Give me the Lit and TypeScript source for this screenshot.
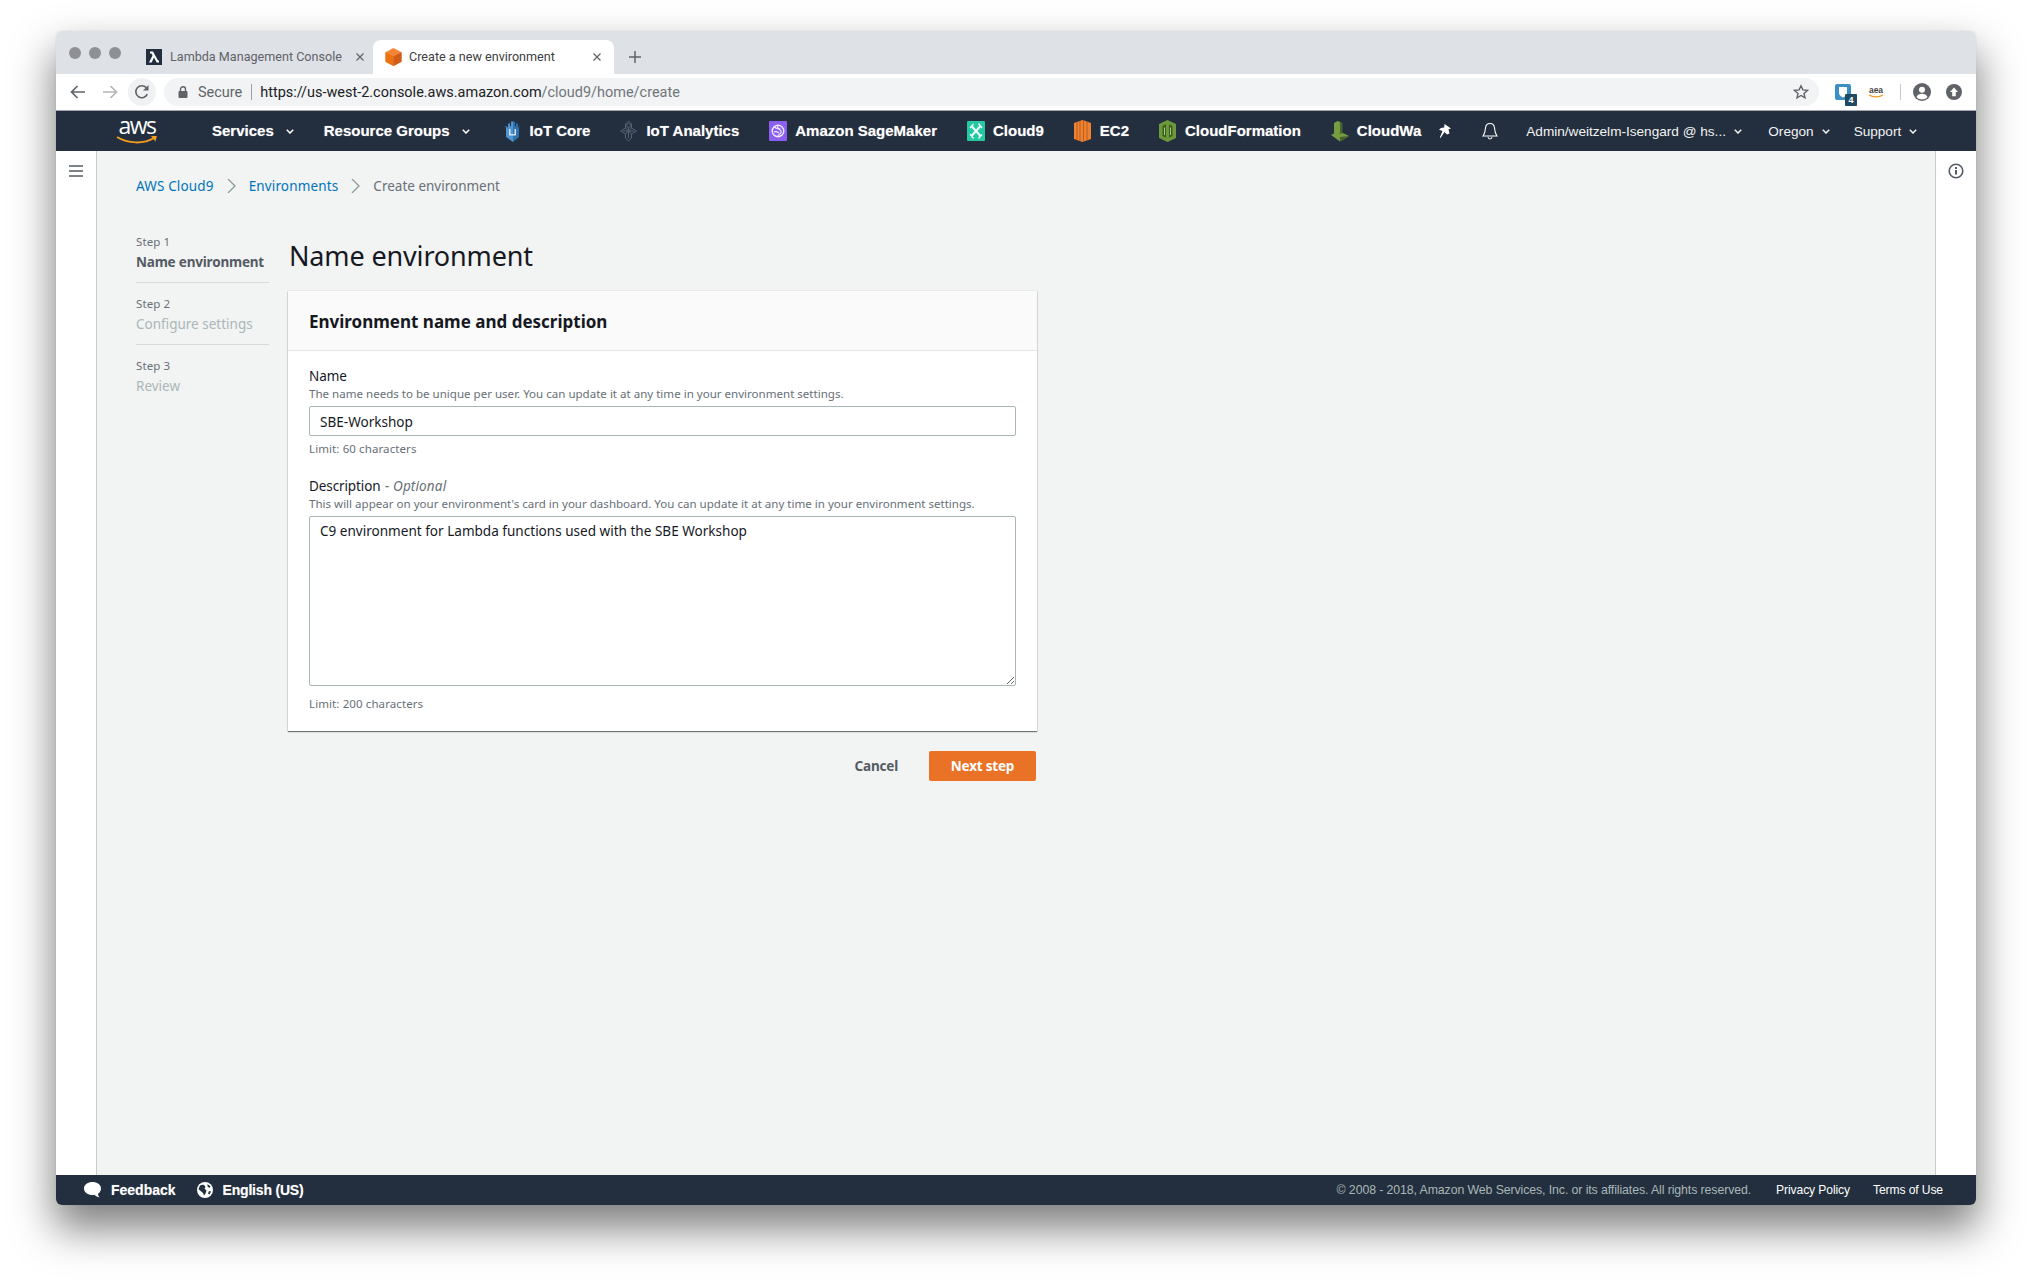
import { LitElement, html, css, svg } from "lit";
import { customElement } from "lit/decorators.js";

const caret = html`<svg class="caret" width="8" height="5" viewBox="0 0 8 5"><path d="M.8.8L4 4l3.200-3.200" fill="none" stroke="currentColor" stroke-width="1.500"/></svg>`;

const icons: Record<string, unknown> = {
  iot: svg`<path d="M0 7l2-1v11l7 5v-20l-1-1-1 1v4l-1 .5V3L4 4v3.500L2 6.500z" fill="#5294cf"/><path d="M17 7l-2-1v11l-6 5V2l1-1 1 1v4l1 .5V3l2 1v3.500l2-1z" fill="#2d72ad"/><path d="M5 9h1.500v5H5zM10.500 9H12v5h-1.500zM5 14h7v1.500H5z" fill="#cfe3f5"/>`,
  analytics: svg`<g fill="none" stroke="#566270" stroke-width="1"><path d="M8.500 1l3 3v4l5 3-5 3v4l-3 3-3-3v-4l-5-3 5-3V4z"/><circle cx="8.500" cy="5.500" r="2"/><path d="M8.500 7.500V18M3 11h11M5.500 8l3 3 3-3M5.500 14l3-3 3 3"/></g>`,
  sage: svg`<rect x="0" y="1" width="18" height="20" rx="1" fill="#8c5ff0"/><circle cx="9" cy="11" r="5.800" fill="none" stroke="#efe8ff" stroke-width="1.400"/><path d="M5.500 7c2 2 5 1 6.500 4s-3 3-3 5M5 12c2-1 3.500 0 5 1M9 5.500c-1 2 0 3.500 2.500 3.500" fill="none" stroke="#efe8ff" stroke-width="1.100"/>`,
  cloud9: svg`<rect x="0" y="1" width="18" height="20" rx="1" fill="#27c7a3"/><path d="M4.500 6l9 10M13.500 6l-9 10" stroke="#e9fff9" stroke-width="2"/><path d="M3 8l3.500-4M11.500 18.500L15 14.500M11.500 3.500L15 8M3 14l3.500 4.500" stroke="#e9fff9" stroke-width="1.300"/>`,
  ec2: svg`<path d="M8.500 0L17 3v16l-8.500 3L0 19V3z" fill="#f0812f"/><path d="M3 2v18M6 1v20M9.500 .5v21M13 1.500v19" stroke="#a65520" stroke-width=".8"/>`,
  cf: svg`<path d="M8.500 0l8.500 4v14l-8.500 4L0 18V4z" fill="#6a9a3a"/><path d="M3.500 6l3.500-1.800v13.600L3.500 16zM13.500 6L10 4.200v13.600l3.500-1.800z" fill="#3e5e20"/><path d="M5 7.500h1v7.500H5zM11 7.500h1v7.500h-1z" fill="#a9c77a"/>`,
  cw: svg`<path d="M3 13V3l3.500-2 3 1v11z" fill="#759c3e"/><path d="M9.500 2l2 1v10l-2 1z" fill="#4b612c"/><path d="M0 15l5.500-3 3.500 1.500 3-.5 6 3-9 5.500z" fill="#759c3e"/><path d="M9 17l9-1-9 5.500z" fill="#4b612c"/>`,
};

const navIcon = (k: string) => html`<svg class="nicon" width="18" height="22" viewBox="0 0 18 22">${icons[k]}</svg>`;

const shortcuts: [string, string][] = [
  ["iot", "IoT Core"],
  ["analytics", "IoT Analytics"],
  ["sage", "Amazon SageMaker"],
  ["cloud9", "Cloud9"],
  ["ec2", "EC2"],
  ["cf", "CloudFormation"],
  ["cw", "CloudWa"],
];

@customElement("app-root")
export class AppRoot extends LitElement {
  static styles = css`
    :host { display: block; height: 1285px; padding: 31px 56px 0; box-sizing: border-box; background: #fff; overflow: hidden; font-family: "Roboto", "Liberation Sans", sans-serif; }
    .window { width: 1920px; height: 1174px; display: flex; flex-direction: column; border-radius: 6px; overflow: hidden; }
    .frame { width: 1920px; height: 1174px; border-radius: 6px; box-shadow: 0 22px 42px 2px rgba(0,0,0,.5), 0 0 1px rgba(0,0,0,.25); }

    .tabs { height: 43px; flex: none; background: #dee1e6; display: flex; align-items: flex-end; }
    .lights { display: flex; gap: 8px; padding: 0 0 15px 13px; width: 90px; box-sizing: border-box; flex: none; align-self: flex-end; }
    .lights i { width: 12px; height: 12px; border-radius: 50%; background: #8e9095; display: block; }
    .tab { display: flex; align-items: center; height: 34px; padding-bottom: 1px; font-size: 12.600px; color: #5f6368; box-sizing: border-box; flex: none; }
    .tab1 { width: 227px; }
    .tab1 .fav { margin-right: 8px; }
    .tab1 .x { margin-left: 13px; }
    .tab2 { width: 241px; background: #fff; border-radius: 8px 8px 0 0; padding-left: 12px; color: #3c4043; }
    .tab2 .fav { margin-right: 7px; }
    .tab2 .x { margin-left: auto; margin-right: 12px; }
    .x { flex: none; }
    .plus { margin: 0 0 11px 15px; flex: none; }

    .bar { height: 36px; flex: none; background: #fff; border-bottom: 1px solid #a4a6a9; display: flex; align-items: center; box-sizing: content-box; }
    .tool { width: 32px; display: flex; justify-content: center; flex: none; }
    .reload { width: 28px; height: 28px; border-radius: 50%; background: #f0f1f2; display: flex; align-items: center; justify-content: center; flex: none; margin: 0 8px 0 0; }
    .navbtns { display: flex; padding-left: 6px; flex: none; }
    .reload-wrap { padding-left: 2px; flex: none; }
    .omni { flex: none; width: 1655px; height: 28px; border-radius: 14px; background: #f1f3f4; display: flex; align-items: center; padding: 0 10px 0 14px; box-sizing: border-box; font-size: 14.460px; color: #5f6368; }
    .omni .sec { margin-left: 10px; }
    .omni .sep { width: 1px; height: 16px; background: #9aa0a6; margin: 0 8px 0 9px; }
    .omni .url { color: #202124; }
    .omni .url span { color: #70757a; }
    .omni .star { margin-left: auto; }
    .ext { flex: none; display: flex; align-items: center; height: 36px; padding-left: 16px; }
    .bw { width: 16px; height: 16px; position: relative; display: block; }
    .badge { position: absolute; left: 10px; top: 10px; width: 12px; height: 12px; background: #1f4a63; color: #fff; font: bold 9px/12px "Liberation Sans", sans-serif; text-align: center; border-radius: 1px; }
    .aea { margin-left: 17px; width: 16px; display: block; }
    .xsep { width: 1px; height: 16px; background: #c6c8cb; margin: 0 12px 0 16px; }
    .prof { display: block; }
    .up { display: block; margin-left: 15px; }

    .nav { height: 40px; flex: none; background: #232f3e; display: flex; align-items: center; color: #fff; font-family: "Liberation Sans", sans-serif; }
    .logo { margin: -2px 0 0 60px; flex: none; width: 42px; display: flex; flex-direction: column; align-items: center; }
    .logo span { font: 400 23px/18px "Open Sans", sans-serif; letter-spacing: -1.500px; color: #fff; display: block; }
    .logo svg { display: block; margin-top: 2px; }
    .svc { display: flex; align-items: center; gap: 30px; margin-left: 54px; flex: none; }
    .nitem { display: flex; align-items: center; font-weight: 700; font-size: 15px; line-height: 20px; text-shadow: 0 0 1px rgba(255,255,255,.5); white-space: nowrap; }
    .nitem .nicon { margin-right: 8px; flex: none; }
    .nitem .caret { margin-left: 12px; }
    .nitem.rg { margin-right: 4px; }
    .pin { margin-left: 17px; flex: none; }
    .bell { margin-left: 29px; flex: none; }
    .acct { display: flex; align-items: center; font-size: 13.600px; margin-left: 27px; color: #f2f3f3; flex: none; }
    .acct span { white-space: nowrap; }
    .acct .caret { margin: 0 0 0 8px; flex: none; }
    .acct .a { width: 218px; display: flex; align-items: center; }
    .acct .b { margin-left: 24px; display: flex; align-items: center; }
    .acct .c { margin-left: 24px; display: flex; align-items: center; }

    .main { flex: 1; display: flex; background: #f2f3f3; min-height: 0; font-family: "Noto Sans", sans-serif; }
    .rail { width: 40px; flex: none; background: #fff; border-right: 1px solid #c8cccc; display: flex; justify-content: center; padding-top: 14px; box-sizing: content-box; }
    .rail.right { border-right: 0; border-left: 1px solid #c8cccc; padding-top: 12px; }
    .burger { display: block; margin-left: -1px; }
    .info { display: block; }
    .center { flex: 1; padding: 17px 0 0 39px; min-width: 0; }

    .crumbs { display: flex; align-items: center; font-size: 13.500px; line-height: 36px; height: 36px; color: #687078; }
    .crumbs a { color: #0073bb; letter-spacing: .15px; }
    .crumbs svg { margin: 0 13px; display: block; }
    .wizard { display: flex; margin-top: 28px; }
    .steps { width: 133px; flex: none; margin-right: 19px; }
    .step { padding-bottom: 10px; border-bottom: 1px solid #d5dbdb; margin-bottom: 11px; }
    .step:last-child { border-bottom: 0; }
    .step .n { font-size: 11.500px; line-height: 20px; color: #687078; letter-spacing: .1px; }
    .step .t { font-size: 13.500px; line-height: 20px; color: #aab7b8; white-space: nowrap; }
    .step.on .t { color: #545b64; font-weight: 700; letter-spacing: -.2px; }
    .form { width: 749px; flex: none; margin-top: 2px; }
    h1 { margin: 0 0 0 1px; font-size: 27px; line-height: 44px; font-weight: 400; color: #16191f; letter-spacing: -.15px; }
    .card { margin-top: 13px; background: #fff; box-shadow: 0 1px 1px rgba(0,0,0,.5), 0 0 1px rgba(0,0,0,.25); }
    .card header { height: 58px; padding: 1px 0 0 21px; background: #fafafa; border-bottom: 1px solid #e5e8e8; display: flex; align-items: center; font-size: 17px; font-weight: 700; color: #16191f; box-sizing: content-box; }
    .fields { padding: 15px 21px 19px; }
    .lbl { font-size: 13.500px; line-height: 20px; color: #16191f; letter-spacing: -.1px; }
    .lbl em { color: #687078; letter-spacing: .15px; margin-left: 1px; }
    .hint { font-size: 11.560px; line-height: 16px; color: #687078; }
    .box { display: block; width: 100%; box-sizing: border-box; border: 1px solid #aab7b8; border-radius: 2px; background: #fff; margin-top: 4px; padding: 0 10px; font: inherit; font-size: 13.560px; color: #16191f; outline: none; }
    input.box { height: 30px; padding-top: 1px; }
    textarea.box { height: 170px; padding-top: 4px; line-height: 20px; resize: vertical; }
    .limit { font-size: 11.500px; line-height: 16px; color: #687078; margin-top: 5px; letter-spacing: .1px; }
    .g2 { margin-top: 19px; }
    .g2 .box + .limit { margin-top: 10px; }
    .actions { display: flex; justify-content: flex-end; align-items: center; margin: 20px 1px 0 0; letter-spacing: -.2px; }
    .cancel { font-size: 13.500px; font-weight: 700; color: #545b64; margin-right: 31px; }
    .next { width: 107px; height: 30px; background: #ea7226; color: #fff; border-radius: 2px; display: flex; align-items: center; justify-content: center; font-size: 13.500px; font-weight: 700; }

    .foot { height: 30px; flex: none; background: #232f3e; display: flex; align-items: center; color: #fff; font-family: "Liberation Sans", sans-serif; }
    .fl { display: flex; align-items: center; font-size: 14px; font-weight: 700; margin-left: 28px; text-shadow: 0 0 1px rgba(255,255,255,.4); }
    .fl svg { display: block; margin-right: 10px; }
    .fl .g { margin-left: 21px; margin-right: 10px; }
    .fl .en { letter-spacing: -.2px; }
    .fr { margin-left: auto; display: flex; align-items: center; margin-right: 33px; }
    .copy { color: #aab7b8; margin-right: 25px; font-size: 12.340px; letter-spacing: -.1px; }
    .link { margin-left: 23px; font-size: 12.100px; letter-spacing: -.1px; }
    .link.first { margin-left: 0; }
  `;

  render() {
    const x = html`<svg class="x" width="10" height="10" viewBox="0 0 10 10"><path d="M1.500 1.500l7 7M8.500 1.500l-7 7" stroke="#5f6368" stroke-width="1.200"/></svg>`;
    return html`
      <div class="frame"><div class="window">
        <div class="tabs">
          <div class="lights"><i></i><i></i><i></i></div>
          <div class="tab tab1">
            <svg class="fav" width="16" height="16" viewBox="0 0 16 16"><rect width="16" height="16" fill="#232f3e"/><path d="M4 2.500h3l5 9h1v2h-2.300L8 8.500 5.600 13.500H3l3.500-7-1-2H4z" fill="#fff"/></svg>
            <span>Lambda Management Console</span>${x}
          </div>
          <div class="tab tab2">
            <svg class="fav" width="17" height="18" viewBox="0 0 17 18"><path d="M8.500 0l8 4.200v9.600L8.500 18 .5 13.800V4.200z" fill="#f58536"/><path d="M8.500 8.500v9.500L.5 13.800V4.200z" fill="#ec7211"/><path d="M8.500 8.500l8-4.300v9.600L8.500 18z" fill="#d05c17"/></svg>
            <span>Create a new environment</span>${x}
          </div>
          <svg class="plus" width="12" height="12" viewBox="0 0 12 12"><path d="M6 0v12M0 6h12" stroke="#5f6368" stroke-width="1.500"/></svg>
        </div>
        <div class="bar">
          <div class="navbtns">
            <div class="tool"><svg width="16" height="14" viewBox="0 0 16 14"><path d="M15 7H2M7.500 1L1.500 7l6 6" fill="none" stroke="#5f6368" stroke-width="1.700"/></svg></div>
            <div class="tool"><svg width="16" height="14" viewBox="0 0 16 14"><path d="M1 7h13M8.500 1l6 6-6 6" fill="none" stroke="#b3b6b9" stroke-width="1.700"/></svg></div>
          </div>
          <div class="reload-wrap"><div class="reload"><svg width="16" height="16" viewBox="0 0 16 16"><path d="M13.300 10.200A6 6 0 1 1 12.400 3.800" fill="none" stroke="#5f6368" stroke-width="1.600"/><path d="M14.500 1v5.500H9z" fill="#5f6368"/></svg></div></div>
          <div class="omni">
            <svg width="10" height="12" viewBox="0 0 10 12"><path d="M2.500 5V3.300a2.500 2.500 0 0 1 5 0V5" fill="none" stroke="#5f6368" stroke-width="1.400"/><rect x="0.500" y="5" width="9" height="7" rx="1" fill="#5f6368"/></svg>
            <span class="sec">Secure</span><i class="sep"></i>
            <span class="url">https://us-west-2.console.aws.amazon.com<span>/cloud9/home/create</span></span>
            <svg class="star" width="16" height="16" viewBox="0 0 16 16"><path d="M8 1.800l1.900 4.100 4.500.5-3.400 3 1 4.400L8 11.500l-4 2.300 1-4.400-3.400-3 4.500-.5z" fill="none" stroke="#5f6368" stroke-width="1.400"/></svg>
          </div>
          <div class="ext">
            <span class="bw"><svg width="16" height="16" viewBox="0 0 16 16"><rect width="16" height="16" rx="2" fill="#3b8fc4"/><path d="M4 3h8v6c0 2-2 3.500-4 4.500C6 12.500 4 11 4 9z" fill="#fff"/></svg><span class="badge">4</span></span>
            <svg class="aea" width="16" height="13" viewBox="0 0 16 13"><text x="8" y="7" text-anchor="middle" font-family="Liberation Sans, sans-serif" font-size="8.500" font-weight="700" fill="#444">aea</text><path d="M1 9c4 2.500 10 2.500 14 0" fill="none" stroke="#f29b1e" stroke-width="1.300"/></svg>
            <i class="xsep"></i>
            <svg class="prof" width="18" height="18" viewBox="0 0 18 18"><circle cx="9" cy="9" r="9" fill="#5f6368"/><circle cx="9" cy="6.800" r="3" fill="#fff"/><path d="M3.500 14c1-2.500 3-3.300 5.500-3.300s4.500.8 5.500 3.300C13 15.800 11 16.500 9 16.500S5 15.800 3.500 14z" fill="#fff"/></svg>
            <svg class="up" width="16" height="16" viewBox="0 0 16 16"><circle cx="8" cy="8" r="8" fill="#5f6368"/><path d="M8 3.500L12 8H9.800v4.200H6.200V8H4z" fill="#fff"/></svg>
          </div>
        </div>
        <div class="nav">
          <div class="logo">
            <span>aws</span>
            <svg width="42" height="9" viewBox="0 0 42 9"><path d="M1 1c11 7 27 7 37 1" fill="none" stroke="#f29b1e" stroke-width="2"/><path d="M35 0l6-.5-1.500 6z" fill="#f29b1e"/></svg>
          </div>
          <div class="svc">
            <div class="nitem">Services${caret}</div>
            <div class="nitem rg">Resource Groups${caret}</div>
            ${shortcuts.map(([k, t]) => html`<div class="nitem">${navIcon(k)}${t}</div>`)}
          </div>
          <svg class="pin" width="14" height="15" viewBox="0 0 14 15"><path d="M6.500 0l6.500 4.500-2.500.8 1 4.200-2.500 1L6.500 8 2.500 14 1.800 13.500 4.500 7 1 5.800 3 4l3.200-.6z" fill="#fff"/></svg>
          <svg class="bell" width="18" height="18" viewBox="0 0 18 18"><path d="M9 1.500c-2.800 0-4.300 2-4.500 4.500-.2 3-.6 5.500-2.500 8h14c-1.900-2.500-2.300-5-2.500-8-.2-2.500-1.700-4.500-4.500-4.500zM7 15c.2 1.300 1 2 2 2s1.800-.7 2-2" fill="none" stroke="#fff" stroke-width="1.100"/></svg>
          <div class="acct">
            <div class="a"><span>Admin/weitzelm-Isengard @ hs...</span>${caret}</div>
            <div class="b"><span>Oregon</span>${caret}</div>
            <div class="c"><span>Support</span>${caret}</div>
          </div>
        </div>
        <div class="main">
          <div class="rail"><svg class="burger" width="14" height="12" viewBox="0 0 14 12"><path d="M0 1h14M0 6h14M0 11h14" stroke="#545b64" stroke-width="1.700"/></svg></div>
          <div class="center">
            <div class="crumbs">
              <a>AWS Cloud9</a>
              <svg width="9" height="14" viewBox="0 0 9 14"><path d="M1 0l7 7-7 7" fill="none" stroke="#879596" stroke-width="1.200"/></svg>
              <a>Environments</a>
              <svg width="9" height="14" viewBox="0 0 9 14"><path d="M1 0l7 7-7 7" fill="none" stroke="#879596" stroke-width="1.200"/></svg>
              <span>Create environment</span>
            </div>
            <div class="wizard">
              <div class="steps">
                <div class="step on"><div class="n">Step 1</div><div class="t">Name environment</div></div>
                <div class="step"><div class="n">Step 2</div><div class="t">Configure settings</div></div>
                <div class="step"><div class="n">Step 3</div><div class="t">Review</div></div>
              </div>
              <div class="form">
                <h1>Name environment</h1>
                <div class="card">
                  <header>Environment name and description</header>
                  <div class="fields">
                    <div class="lbl">Name</div>
                    <div class="hint">The name needs to be unique per user. You can update it at any time in your environment settings.</div>
                    <input class="box" .value=${"SBE-Workshop"} />
                    <div class="limit">Limit: 60 characters</div>
                    <div class="g2">
                      <div class="lbl">Description <em>- Optional</em></div>
                      <div class="hint">This will appear on your environment's card in your dashboard. You can update it at any time in your environment settings.</div>
                      <textarea class="box" .value=${"C9 environment for Lambda functions used with the SBE Workshop"}></textarea>
                      <div class="limit">Limit: 200 characters</div>
                    </div>
                  </div>
                </div>
                <div class="actions"><span class="cancel">Cancel</span><span class="next">Next step</span></div>
              </div>
            </div>
          </div>
          <div class="rail right"><svg class="info" width="16" height="16" viewBox="0 0 16 16"><circle cx="8" cy="8" r="6.800" fill="none" stroke="#545b64" stroke-width="1.600"/><rect x="7" y="7" width="2" height="4.500" fill="#545b64"/><rect x="7" y="4" width="2" height="2" fill="#545b64"/></svg></div>
        </div>
        <div class="foot">
          <div class="fl">
            <svg width="17" height="16" viewBox="0 0 17 16"><path d="M8.500 0C13 0 17 2.500 17 6.500c0 2.500-1.500 4.300-3 5.300.1 1.300.7 2.700 1.500 3.700-2-.3-3.800-1.300-5-2.700-.6.100-1.300.2-2 .2C4 13 0 10.500 0 6.500S4 0 8.500 0z" fill="#fff"/></svg>
            <span>Feedback</span>
            <svg class="g" width="16" height="16" viewBox="0 0 16 16"><circle cx="8" cy="8" r="8" fill="#fff"/><path d="M3 3.500c1.500-.8 3-1 4-.5l1.500 2-1 1.500 2 2-1 3-1.500 2-1-2.500L3 8.500 1.500 7zM10.500 2l3 2.500-1 1.500-2-1.500zM12 9l2 .5-1.500 3-1.500-1z" fill="#232f3e"/></svg>
            <span class="en">English (US)</span>
          </div>
          <div class="fr">
            <span class="copy">© 2008 - 2018, Amazon Web Services, Inc. or its affiliates. All rights reserved.</span>
            <span class="link first">Privacy Policy</span>
            <span class="link">Terms of Use</span>
          </div>
        </div>
      </div></div>
    `;
  }
}
